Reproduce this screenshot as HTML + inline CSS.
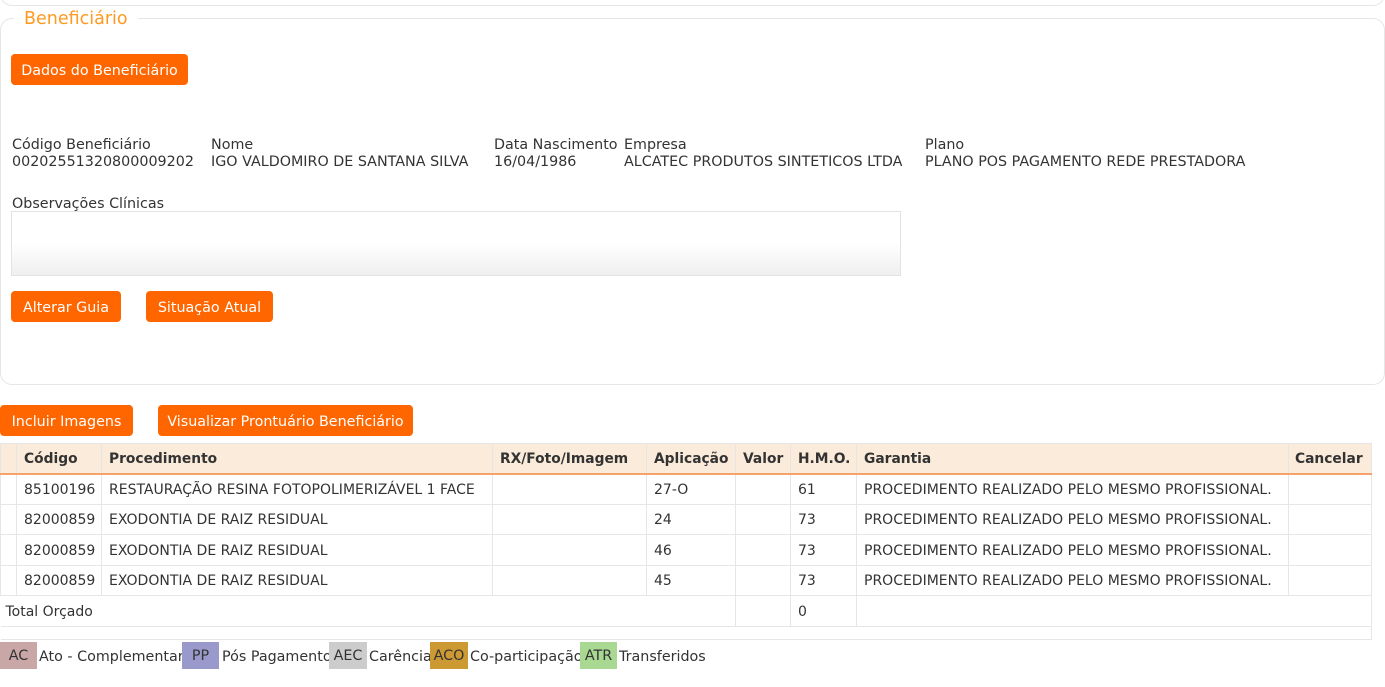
<!DOCTYPE html>
<html><head><meta charset="utf-8"><style>
*{box-sizing:border-box;margin:0;padding:0}
body{width:1385px;height:687px;background:#fff;font-family:"DejaVu Sans","Liberation Sans",sans-serif;font-size:14.3px;color:#333;position:relative;overflow:hidden}
.a{position:absolute;white-space:nowrap}
.btn{position:absolute;background:#ff6600;color:#fff;border-radius:4px;height:31px;line-height:34px;text-align:center;font-size:14.3px}
.fs{position:absolute;border:1px solid #e6e6e6;border-radius:12px}
table{position:absolute;left:0;top:443px;border-collapse:collapse;table-layout:fixed;width:1371px;font-size:14px}
td,th{border:1px solid #e6e6e6;padding:2px 7px 0;height:30.5px;text-align:left;white-space:nowrap;overflow:hidden}
th{background:#faebda;border-bottom:2px solid #f4a26a;font-weight:bold;height:30px;font-size:13.8px}
.lg{position:absolute;top:642px;height:27px;line-height:28px;text-align:center}
</style></head><body>
<div class="fs" style="left:0;top:-20px;width:1385px;height:26px"></div>
<div class="fs" style="left:0;top:18px;width:1385px;height:367px"></div>
<div class="a" style="left:14px;top:9px;background:#fff;padding:0 10px;color:#ff9a1f;font-size:17.5px">Beneficiário</div>
<div class="btn" style="left:11px;top:54px;width:177px">Dados do Beneficiário</div>
<div class="a" style="left:12px;top:137px">Código Beneficiário</div>
<div class="a" style="left:12px;top:154px">00202551320800009202</div>
<div class="a" style="left:211px;top:137px">Nome</div>
<div class="a" style="left:211px;top:154px">IGO VALDOMIRO DE SANTANA SILVA</div>
<div class="a" style="left:494px;top:137px">Data Nascimento</div>
<div class="a" style="left:494px;top:154px">16/04/1986</div>
<div class="a" style="left:624px;top:137px">Empresa</div>
<div class="a" style="left:624px;top:154px">ALCATEC PRODUTOS SINTETICOS LTDA</div>
<div class="a" style="left:925px;top:137px">Plano</div>
<div class="a" style="left:925px;top:154px">PLANO POS PAGAMENTO REDE PRESTADORA</div>
<div class="a" style="left:12px;top:196px">Observações Clínicas</div>
<div class="a" style="left:11px;top:211px;width:890px;height:65px;border:1px solid #e3e3e3;background:linear-gradient(#fff 50%,#efefef)"></div>
<div class="btn" style="left:11px;top:291px;width:110px">Alterar Guia</div>
<div class="btn" style="left:146px;top:291px;width:127px">Situação Atual</div>
<div class="btn" style="left:0;top:405px;width:133px">Incluir Imagens</div>
<div class="btn" style="left:158px;top:405px;width:255px">Visualizar Prontuário Beneficiário</div>
<table>
<colgroup><col style="width:16px"><col style="width:85px"><col style="width:391px"><col style="width:154px"><col style="width:89px"><col style="width:55px"><col style="width:66px"><col style="width:432px"><col style="width:83px"></colgroup>
<tr><th></th><th>Código</th><th>Procedimento</th><th>RX/Foto/Imagem</th><th>Aplicação</th><th>Valor</th><th>H.M.O.</th><th>Garantia</th><th style="padding-left:6px">Cancelar</th></tr>
<tr><td></td><td>85100196</td><td>RESTAURAÇÃO RESINA FOTOPOLIMERIZÁVEL 1 FACE</td><td></td><td>27-O</td><td></td><td>61</td><td>PROCEDIMENTO REALIZADO PELO MESMO PROFISSIONAL.</td><td></td></tr>
<tr><td></td><td>82000859</td><td>EXODONTIA DE RAIZ RESIDUAL</td><td></td><td>24</td><td></td><td>73</td><td>PROCEDIMENTO REALIZADO PELO MESMO PROFISSIONAL.</td><td></td></tr>
<tr><td></td><td>82000859</td><td>EXODONTIA DE RAIZ RESIDUAL</td><td></td><td>46</td><td></td><td>73</td><td>PROCEDIMENTO REALIZADO PELO MESMO PROFISSIONAL.</td><td></td></tr>
<tr><td></td><td>82000859</td><td>EXODONTIA DE RAIZ RESIDUAL</td><td></td><td>45</td><td></td><td>73</td><td>PROCEDIMENTO REALIZADO PELO MESMO PROFISSIONAL.</td><td></td></tr>
<tr><td colspan="5" style="padding-left:5px;border-left:none">Total Orçado</td><td></td><td>0</td><td colspan="2"></td></tr>
<tr><td colspan="9" style="height:13px;border-left:none;padding:0"></td></tr>
</table>
<div class="lg" style="left:0;width:37px;background:#c9a7a7">AC</div>
<div class="a" style="left:39px;top:649px">Ato - Complementar</div>
<div class="lg" style="left:182px;width:37px;background:#9999cc">PP</div>
<div class="a" style="left:222px;top:649px">Pós Pagamento</div>
<div class="lg" style="left:329px;width:38px;background:#cccccc">AEC</div>
<div class="a" style="left:369px;top:649px">Carência</div>
<div class="lg" style="left:430px;width:38px;background:#cc9933">ACO</div>
<div class="a" style="left:470px;top:649px">Co-participação</div>
<div class="lg" style="left:580px;width:37px;background:#a8d891">ATR</div>
<div class="a" style="left:619px;top:649px">Transferidos</div>
</body></html>
